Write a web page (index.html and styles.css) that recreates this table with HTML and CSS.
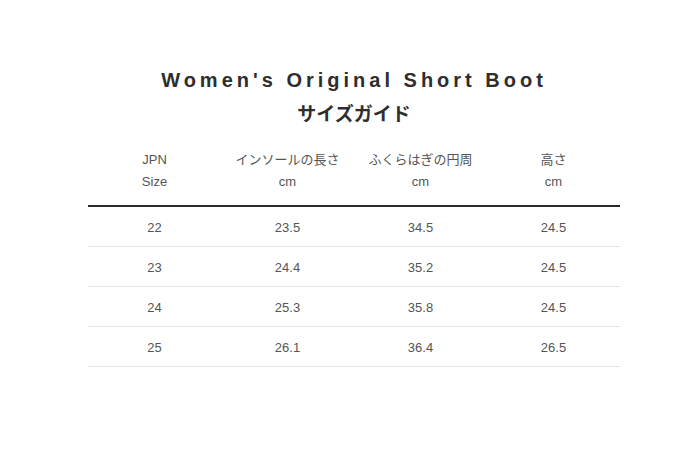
FILE: index.html
```html
<!DOCTYPE html>
<html lang="ja">
<head>
<meta charset="utf-8">
<link rel="stylesheet" href="styles.css">
</head>
<body>
<div class="page">
  <h1 class="title">Women's Original Short Boot</h1>
  <h2 class="subtitle">サイズガイド</h2>
  <table class="size-table">
    <thead>
      <tr>
        <th>JPN<br>Size</th>
        <th>インソールの長さ<br>cm</th>
        <th>ふくらはぎの円周<br>cm</th>
        <th>高さ<br>cm</th>
      </tr>
    </thead>
    <tbody>
      <tr><td>22</td><td>23.5</td><td>34.5</td><td>24.5</td></tr>
      <tr><td>23</td><td>24.4</td><td>35.2</td><td>24.5</td></tr>
      <tr><td>24</td><td>25.3</td><td>35.8</td><td>24.5</td></tr>
      <tr><td>25</td><td>26.1</td><td>36.4</td><td>26.5</td></tr>
    </tbody>
  </table>
</div>
</body>
</html>
```
FILE: styles.css
```css
html, body {
  margin: 0;
  padding: 0;
  background: #ffffff;
}
.page {
  width: 532px;
  margin: 0 0 0 88px;
  padding-top: 68px;
  font-family: "Liberation Sans", "Noto Sans CJK JP", sans-serif;
  color: #555;
}
.title {
  margin: 0;
  text-align: center;
  font-size: 20px;
  line-height: 24px;
  font-weight: bold;
  letter-spacing: 4px;
  color: #2e2e2e;
}
.subtitle {
  margin: 8px 0 0;
  text-align: center;
  font-family: "Noto Sans CJK JP", sans-serif;
  font-size: 19px;
  line-height: 26px;
  font-weight: bold;
  color: #2e2e2e;
}
.size-table {
  width: 532px;
  margin-top: 23px;
  border-collapse: collapse;
  table-layout: fixed;
}
.size-table th {
  font-weight: normal;
  font-size: 13px;
  line-height: 22px;
  color: #555;
  text-align: center;
  padding: 0 0 12px;
  border-bottom: 2px solid #2a2a2a;
}
.size-table td {
  font-size: 13px;
  height: 38px;
  padding: 1px 0 0;
  color: #555;
  text-align: center;
  vertical-align: middle;
  border-bottom: 1px solid #e6e6e6;
}
```
